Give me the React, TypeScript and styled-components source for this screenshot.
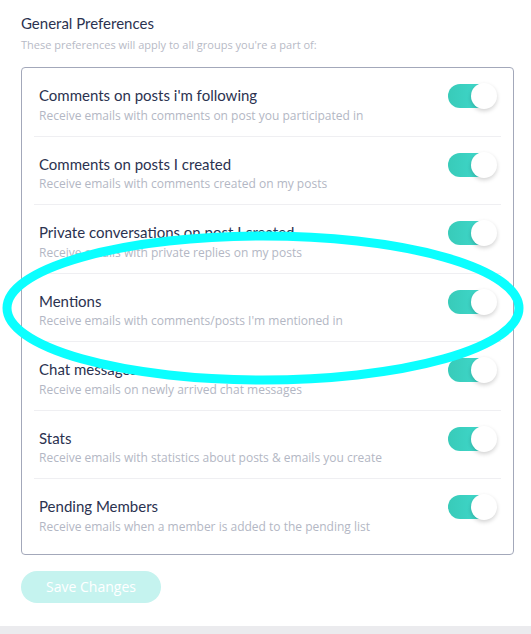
import React from "react";
import styled, { createGlobalStyle } from "styled-components";

const Global = createGlobalStyle`
  html, body { margin: 0; padding: 0; background: #ebebee; }
  body { font-family: Lato, "Open Sans", sans-serif; -webkit-font-smoothing: antialiased; }
`;

const Card = styled.div`
  position: relative;
  background: #ffffff;
  height: 626px;
  box-sizing: border-box;
  padding: 14px 17px 0 21px;
  box-shadow: 0 1px 3px rgba(0, 0, 0, 0.06);
`;

const Heading = styled.h2`
  margin: 0;
  font-size: 15px;
  line-height: 18px;
  font-weight: 400;
  color: #2b3250;
`;

const Sub = styled.p`
  margin: 5px 0 0;
  font-family: "Open Sans", Lato, sans-serif;
  font-size: 11px;
  line-height: 16px;
  color: #b7bac6;
`;

const Box = styled.div`
  margin-top: 14px;
  border: 1px solid #a3a8ba;
  border-radius: 4px;
  padding: 0 12px 7px 12px;
`;

const Row = styled.div<{ $last?: boolean }>`
  display: flex;
  align-items: flex-start;
  justify-content: space-between;
  padding: 18px 4px 12px 5px;
  border-bottom: ${(p) => (p.$last ? "none" : "1px solid #efeff2")};
`;

const Texts = styled.div`
  display: flex;
  flex-direction: column;
  gap: 3.5px;
`;

const Title = styled.div`
  font-size: 15px;
  line-height: 18px;
  color: #2b3250;
`;

const Desc = styled.div`
  font-family: "Open Sans", Lato, sans-serif;
  font-size: 12px;
  line-height: 16px;
  color: #b3b7c4;
`;

const Track = styled.div`
  position: relative;
  width: 46px;
  height: 24px;
  margin-top: -2px;
  margin-right: 3px;
  border-radius: 12px;
  background: linear-gradient(90deg, #38cbb9, #42dcd0);
`;

const Knob = styled.div`
  position: absolute;
  top: -1px;
  right: -3px;
  width: 26px;
  height: 26px;
  border-radius: 50%;
  background: #ffffff;
  box-shadow: 0 2px 4px rgba(0, 0, 0, 0.18);
`;

const SaveButton = styled.button`
  margin-top: 16px;
  width: 140px;
  height: 32px;
  border: none;
  border-radius: 16px;
  background: #c5f3ef;
  color: #ffffff;
  font-family: "Open Sans", Lato, sans-serif;
  font-size: 14px;
  padding: 0;
`;

const Overlay = styled.svg`
  position: absolute;
  left: 0;
  top: 0;
  pointer-events: none;
`;

const prefs = [
  ["Comments on posts i'm following", "Receive emails with comments on post you participated in"],
  ["Comments on posts I created", "Receive emails with comments created on my posts"],
  ["Private conversations on post I created", "Receive emails with private replies on my posts"],
  ["Mentions", "Receive emails with comments/posts I'm mentioned in"],
  ["Chat messages", "Receive emails on newly arrived chat messages"],
  ["Stats", "Receive emails with statistics about posts & emails you create"],
  ["Pending Members", "Receive emails when a member is added to the pending list"],
];

export default function App() {
  return (
    <>
      <Global />
      <Card>
        <Heading>General Preferences</Heading>
        <Sub>These preferences will apply to all groups you're a part of:</Sub>
        <Box>
          {prefs.map(([t, d], i) => (
            <Row key={t} $last={i === prefs.length - 1}>
              <Texts>
                <Title>{t}</Title>
                <Desc>{d}</Desc>
              </Texts>
              <Track>
                <Knob />
              </Track>
            </Row>
          ))}
        </Box>
        <SaveButton>Save Changes</SaveButton>
        <Overlay width="531" height="634" viewBox="0 0 531 634">
          <ellipse cx="263" cy="308" rx="256" ry="72" fill="none" stroke="#0bffff" strokeWidth="9" />
        </Overlay>
      </Card>
    </>
  );
}
